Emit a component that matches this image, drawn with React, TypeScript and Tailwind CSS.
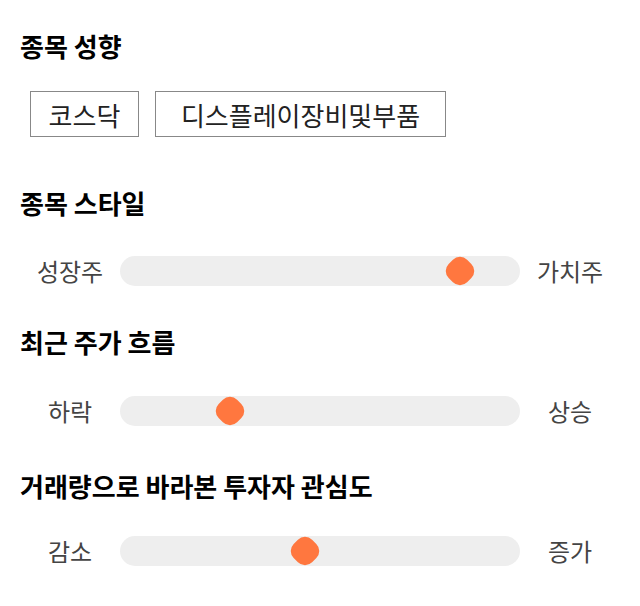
import React from "react";

function Slider({ left, right, pos, className }: { left: string; right: string; pos: number; className?: string }) {
  return (
    <div className={"flex items-center h-[30px] " + (className ?? "")}>
      <div className="w-[100px] text-center text-[24px] leading-[30px] text-[#444]">{left}</div>
      <div className="relative w-[400px] h-[30px] rounded-full bg-[#eeeeee]">
        <div
          className="absolute top-1/2 w-[26px] h-[26px] rounded-[10px] bg-[#ff773f] -translate-x-1/2 -translate-y-1/2 rotate-45"
          style={{ left: pos }}
        />
      </div>
      <div className="w-[100px] text-center text-[24px] leading-[30px] text-[#444]">{right}</div>
    </div>
  );
}

export default function App() {
  return (
    <div
      className="w-[640px] h-[606px] bg-white px-[20px] pt-[30px]"
      style={{ fontFamily: '"Noto Sans CJK KR", "Noto Sans", sans-serif' }}
    >
      <h2 className="text-[26px] leading-[32px] font-bold text-black">종목 성향</h2>
      <div className="flex gap-[16px] ml-[10px] mt-[29px]">
        <div className="w-[109px] h-[46px] border border-[#888] flex items-center justify-center text-[26px] text-[#222]">코스닥</div>
        <div className="w-[291px] h-[46px] border border-[#888] flex items-center justify-center text-[26px] text-[#222]">디스플레이장비및부품</div>
      </div>
      <h2 className="text-[26px] leading-[32px] font-bold text-black mt-[50px]">종목 스타일</h2>
      <Slider left="성장주" right="가치주" pos={340} className="mt-[37px]" />
      <h2 className="text-[26px] leading-[32px] font-bold text-black mt-[40px]">최근 주가 흐름</h2>
      <Slider left="하락" right="상승" pos={110} className="mt-[38px]" />
      <h2 className="text-[26px] leading-[32px] font-bold text-black mt-[44px]">거래량으로 바라본 투자자 관심도</h2>
      <Slider left="감소" right="증가" pos={185} className="mt-[34px]" />
    </div>
  );
}
